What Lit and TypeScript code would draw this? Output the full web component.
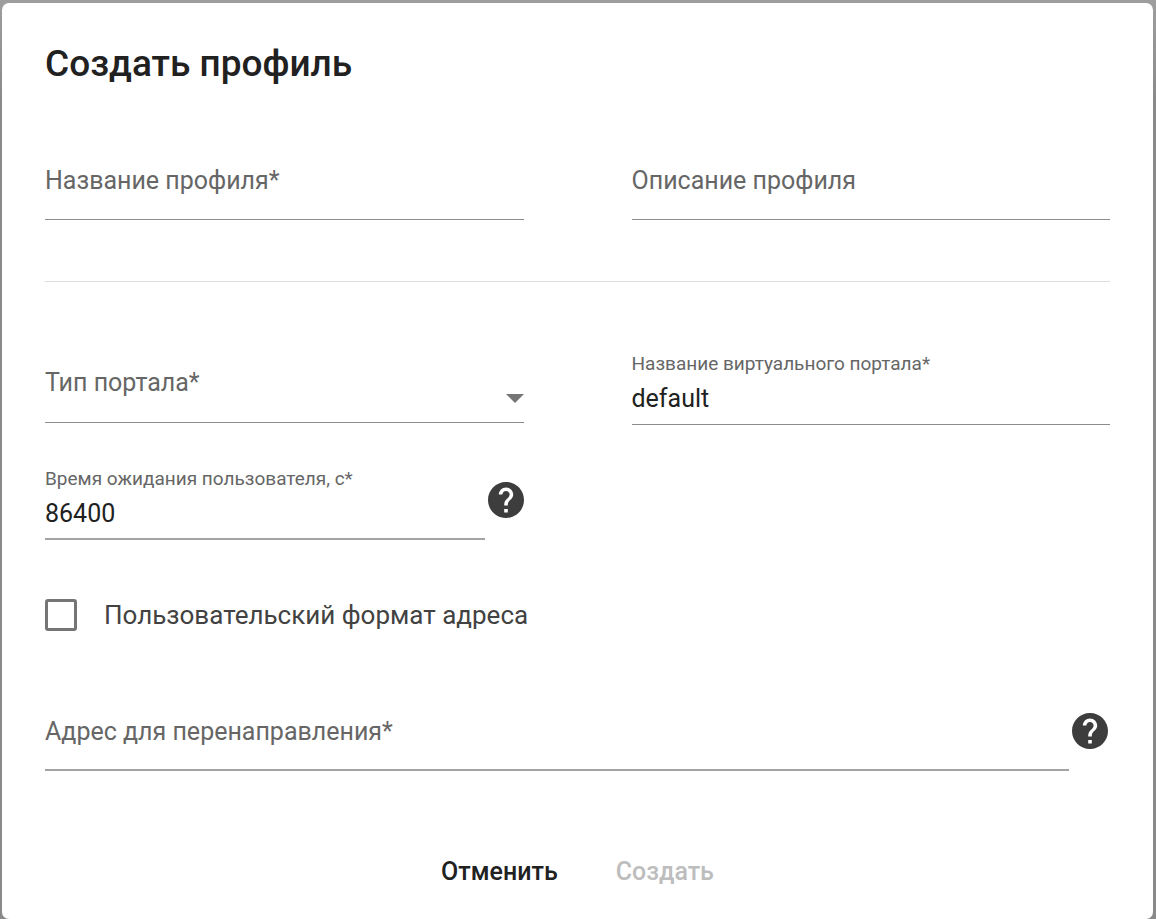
import { LitElement, html, css } from "lit";
import { customElement, property } from "lit/decorators.js";
import { classMap } from "lit/directives/class-map.js";

@customElement("help-button")
class HelpButton extends LitElement {
  @property() hint = "";

  static styles = css`
    :host {
      display: block;
      flex: none;
    }
    .help {
      display: block;
      width: 36px;
      height: 36px;
      padding: 0;
      border: 0;
      background: none;
      cursor: pointer;
    }
    .icon {
      display: block;
      width: 36px;
      height: 36px;
      fill: #3d3d3d;
    }
  `;

  render() {
    return html`
      <button class="help" type="button" aria-label=${this.hint}>
        <svg class="icon" viewBox="2 2 20 20" aria-hidden="true">
          <path
            d="M12 2C6.48 2 2 6.48 2 12s4.48 10 10 10 10-4.48 10-10S17.52 2 12 2zm1 17h-2v-2h2v2zm2.07-7.75l-.9.92C13.45 12.9 13 13.5 13 15h-2v-.5c0-1.1.45-2.1 1.17-2.83l1.24-1.26c.37-.36.59-.86.59-1.41 0-1.1-.9-2-2-2s-2 .9-2 2H8c0-2.21 1.79-4 4-4s4 1.79 4 4c0 .88-.36 1.68-.93 2.25z"
          />
        </svg>
      </button>
    `;
  }
}

@customElement("app-root")
class AppRoot extends LitElement {
  static styles = css`
    :host {
      display: flow-root;
      box-sizing: border-box;
      min-height: 100vh;
      padding: 3px 3px 0 2px;
      background: linear-gradient(#9e9e9e, #8a8a8a 100px);
      font-family: Roboto, "Noto Sans", sans-serif;
      font-size: 25px;
      color: #212121;
    }
    .dialog {
      padding: 32px 43px 15px;
      border-radius: 7px;
      background: #fff;
    }
    .title {
      margin: 0;
      font-size: 37px;
      line-height: 58px;
      font-weight: 500;
    }
    .row {
      display: grid;
      grid-template-columns: 1fr 1fr;
      column-gap: 108px;
      align-items: start;
    }
    .names {
      margin-top: 55px;
    }
    .divider {
      height: 1px;
      margin: 61px 0 71px;
      border: 0;
      background: #dedede;
    }
    .timing {
      margin-top: 43px;
    }
    .with-help {
      display: flex;
      align-items: center;
      gap: 3px;
    }
    .with-help help-button {
      margin-bottom: 8px;
    }
    .field {
      display: grid;
      flex: 1;
      min-width: 0;
      box-sizing: border-box;
      height: 72px;
      border-bottom: 1px solid #8c8c8c;
    }
    .field.thick {
      border-bottom: 2px solid #a3a3a3;
    }
    .field.choice {
      height: 70px;
    }
    .label,
    .control,
    .arrow {
      grid-area: 1 / 1;
    }
    .label {
      align-self: center;
      padding-bottom: 5px;
      line-height: 30px;
      color: #666;
      pointer-events: none;
    }
    .choice .label {
      padding-bottom: 10px;
    }
    .label.floating {
      align-self: start;
      padding: 0;
      font-size: 19px;
      line-height: 22px;
    }
    .control {
      width: 100%;
      min-width: 0;
      box-sizing: border-box;
      padding: 20px 0 0;
      border: 0;
      outline: 0;
      background: none;
      appearance: none;
      font: inherit;
      color: inherit;
    }
    .arrow {
      align-self: center;
      justify-self: end;
      width: 18px;
      height: 9px;
      margin-top: 22px;
      fill: #757575;
      pointer-events: none;
    }
    .option {
      display: flex;
      align-items: center;
      gap: 27px;
      width: max-content;
      margin-top: 59px;
      font-size: 26px;
      line-height: 32px;
      color: #424242;
    }
    .tick {
      width: 32px;
      height: 32px;
      box-sizing: border-box;
      margin: 0;
      border: 3px solid #757575;
      border-radius: 3px;
      background: #fff;
      appearance: none;
    }
    .tick:checked {
      background: #757575;
    }
    .redirect {
      margin-top: 68px;
      padding-right: 2px;
    }
    .actions {
      display: flex;
      justify-content: center;
      margin-top: 69px;
    }
    .action {
      padding: 0 29px;
      border: 0;
      background: none;
      font: inherit;
      font-weight: 500;
      line-height: 64px;
      color: #212121;
      cursor: pointer;
    }
    .action:disabled {
      color: #bdbdbd;
      cursor: default;
    }
  `;

  private field(id: string, label: string, value = "", thick = false) {
    return html`
      <div class=${classMap({ field: true, thick })}>
        <input class="control" id=${id} type="text" .value=${value} />
        <label class=${classMap({ label: true, floating: value !== "" })} for=${id}>${label}</label>
      </div>
    `;
  }

  render() {
    return html`
      <form class="dialog" role="dialog" aria-labelledby="title">
        <h1 class="title" id="title">Создать профиль</h1>

        <div class="row names">
          ${this.field("name", "Название профиля*")}
          ${this.field("description", "Описание профиля")}
        </div>

        <hr class="divider" />

        <div class="row">
          <div class="field choice">
            <select class="control" id="type">
              <option value=""></option>
            </select>
            <label class="label" for="type">Тип портала*</label>
            <svg class="arrow" viewBox="0 0 18 9" aria-hidden="true">
              <path d="M0 0h18L9 9z" />
            </svg>
          </div>
          ${this.field("portal", "Название виртуального портала*", "default")}
        </div>

        <div class="row timing">
          <div class="with-help">
            ${this.field("timeout", "Время ожидания пользователя, с*", "86400", true)}
            <help-button hint="Справка"></help-button>
          </div>
        </div>

        <label class="option">
          <input class="tick" type="checkbox" />
          <span>Пользовательский формат адреса</span>
        </label>

        <div class="with-help redirect">
          ${this.field("redirect", "Адрес для перенаправления*", "", true)}
          <help-button hint="Справка"></help-button>
        </div>

        <div class="actions">
          <button class="action" type="button">Отменить</button>
          <button class="action" type="submit" disabled>Создать</button>
        </div>
      </form>
    `;
  }
}
